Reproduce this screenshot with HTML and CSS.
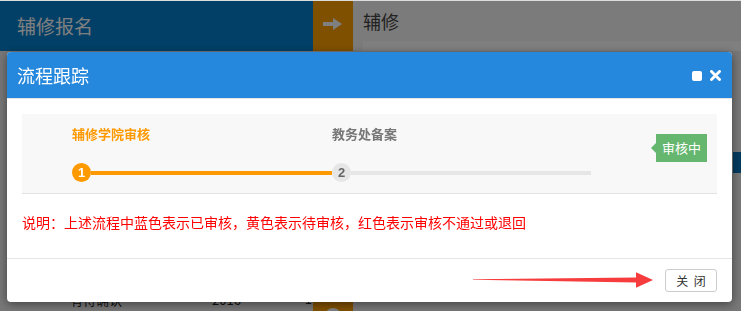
FILE: index.html
```html
<!DOCTYPE html>
<html lang="zh-CN">
<head>
<meta charset="utf-8">
<title>流程跟踪</title>
<link rel="stylesheet" href="styles.css">
</head>
<body>
<div class="page">
  <div class="topbar">
    <div class="brand">辅修报名</div>
    <div class="toggle">
      <svg width="20" height="12" viewBox="0 0 20 12"><path d="M0 4H10V0L19 6L10 12V8H0Z" fill="#fff"/></svg>
    </div>
    <div class="main-head">
      <div class="crumb">辅修</div>
      <div class="panel-top"></div>
    </div>
  </div>
  <div class="content">
    <div class="toolbar"><span class="tool-btn"></span></div>
    <div class="row">
      <span class="cell c1">有待确认</span>
      <span class="cell c2">2016</span>
      <span class="cell c3">1</span>
      <span class="cell c4"><span class="dot"></span></span>
    </div>
  </div>
</div>

<div class="overlay"></div>

<div class="modal">
  <div class="modal-head">
    <div class="modal-title">流程跟踪</div>
    <div class="modal-tools">
      <span class="max-icon"></span>
      <svg class="close-icon" width="11" height="11" viewBox="0 0 11 11"><path d="M1.5 1.5L9.5 9.5M9.5 1.5L1.5 9.5" stroke="#fff" stroke-width="2.8" stroke-linecap="square"/></svg>
    </div>
  </div>
  <div class="modal-body">
    <div class="flow">
      <div class="steps">
        <div class="step done">
          <div class="step-label">辅修学院审核</div>
          <div class="track"><span class="num">1</span><span class="line"></span></div>
        </div>
        <div class="step">
          <div class="step-label">教务处备案</div>
          <div class="track"><span class="num">2</span><span class="line"></span></div>
        </div>
      </div>
      <div class="status">审核中</div>
    </div>
    <p class="note">说明：上述流程中蓝色表示已审核，黄色表示待审核，红色表示审核不通过或退回</p>
  </div>
  <div class="modal-foot">
    <svg class="pointer" width="182" height="18" viewBox="0 0 182 18"><path d="M0 8.2L163 6.6L163 1.2L180 9L163 16.8L163 11.4L0 8.8Z" fill="#f63c3c"/></svg>
    <button class="btn">关 闭</button>
  </div>
</div>
</body>
</html>
```

FILE: styles.css
```css
* { box-sizing: border-box; }
html, body { margin: 0; padding: 0; }
body {
  width: 741px;
  height: 311px;
  overflow: hidden;
  background: #eeeeee;
  font-family: "Noto Sans CJK SC", "Liberation Sans", sans-serif;
  border-top: 1px solid #dcdcdc;
}
.page { width: 741px; }
.topbar { display: flex; height: 50px; }
.brand {
  width: 313px;
  background: #0680ce;
  color: #fff;
  font-size: 19px;
  line-height: 50px;
  padding-left: 17px;
}
.toggle {
  width: 40px;
  background: #ffa000;
  display: flex;
  align-items: center;
  justify-content: center;
  padding-bottom: 4px;
}
.main-head { flex: 1; display: flex; flex-direction: column; background: #f6f6f6; }
.crumb {
  height: 40px;
  line-height: 40px;
  padding-left: 10px;
  font-size: 18px;
  color: #444;
}
.panel-top { flex: 1; margin-left: 10px; background: #fff; }
.content { display: flex; flex-direction: column; }
.toolbar { display: flex; justify-content: flex-end; margin-top: 101px; }
.tool-btn { width: 8px; height: 21px; background: #0674bb; }
.row { display: flex; margin-top: 117px; height: 40px; font-size: 13px; color: #222; }
.cell { line-height: 20px; }
.c1 { width: 212px; padding-left: 70px; }
.c2 { width: 93px; }
.c3 { width: 8px; font-family: "Liberation Sans", sans-serif; font-size: 12px; }
.c4 { width: 40px; background: #ffa000; display: flex; justify-content: center; padding-top: 18px; }
.dot { width: 16px; height: 16px; border-radius: 50%; background: #fff; }

.overlay {
  position: fixed;
  left: 0; right: 0; top: 1px; bottom: 0;
  background: rgba(0, 0, 0, 0.5);
}

.modal {
  position: fixed;
  left: 7px;
  top: 52px;
  width: 725px;
  background: #fff;
  border-radius: 4px;
  overflow: hidden;
  box-shadow: 0 2px 10px rgba(0, 0, 0, 0.45);
}
.modal-head {
  height: 47px;
  background: #2588dc;
  border-bottom: 1px solid #e5e5e5;
  display: flex;
  align-items: center;
  justify-content: space-between;
  padding: 0 11px 0 10px;
}
.modal-title { color: #fff; font-size: 18px; line-height: 24px; }
.modal-tools { display: flex; align-items: center; gap: 8px; }
.max-icon { width: 10px; height: 10px; background: #fff; border-radius: 2px; margin-top: 2px; }
.close-icon { display: block; }

.modal-body { padding: 15px 15px 0; border-bottom: 1px solid #e5e5e5; }
.flow {
  display: flex;
  background: #f8f8f8;
  border-bottom: 1px solid #e2e2e2;
  height: 80px;
  padding: 10px 10px 0 50px;
}
.steps { display: flex; }
.step { width: 260px; display: flex; flex-direction: column; }
.step:last-child { width: 259px; }
.step-label { font-size: 13px; font-weight: bold; line-height: 20px; color: #777; }
.step.done .step-label { color: #ff9900; }
.track { display: flex; align-items: center; margin-top: 19px; }
.num {
  width: 19px; height: 19px;
  border-radius: 50%;
  background: #e6e6e6;
  color: #666;
  font-family: "Liberation Sans", sans-serif;
  font-size: 13px;
  font-weight: bold;
  line-height: 19px;
  text-align: center;
  flex: none;
}
.line { flex: 1; height: 4px; background: #e6e6e6; margin-top: 1px; }
.step.done .num { background: #ff9900; color: #fff; }
.step.done .line { background: #ff9900; margin-top: 0; }
.status {
  position: relative;
  margin-left: auto;
  margin-top: 10px;
  align-self: flex-start;
  height: 28px;
  line-height: 28px;
  padding: 0 6px;
  background: #65b66e;
  color: #fff;
  font-size: 13px;
}
.status::before {
  content: "";
  position: absolute;
  left: -5px;
  top: 9px;
  border-style: solid;
  border-width: 5px 5px 5px 0;
  border-color: transparent #65b66e transparent transparent;
}
.note {
  margin: 18px 0 0;
  padding-bottom: 26px;
  font-size: 14px;
  line-height: 20px;
  color: #ff0000;
}
.modal-foot {
  position: relative;
  height: 43px;
  display: flex;
  justify-content: flex-end;
  align-items: flex-start;
  padding: 10px 15px 0;
}
.pointer { position: absolute; left: 466px; top: 12px; }
.btn {
  width: 52px;
  height: 23px;
  padding: 0;
  background: #fff;
  border: 1px solid #cccccc;
  border-radius: 3px;
  font-family: "Noto Sans CJK SC", sans-serif;
  font-size: 12px;
  color: #333;
  line-height: 21px;
  word-spacing: 3px;
}
```
